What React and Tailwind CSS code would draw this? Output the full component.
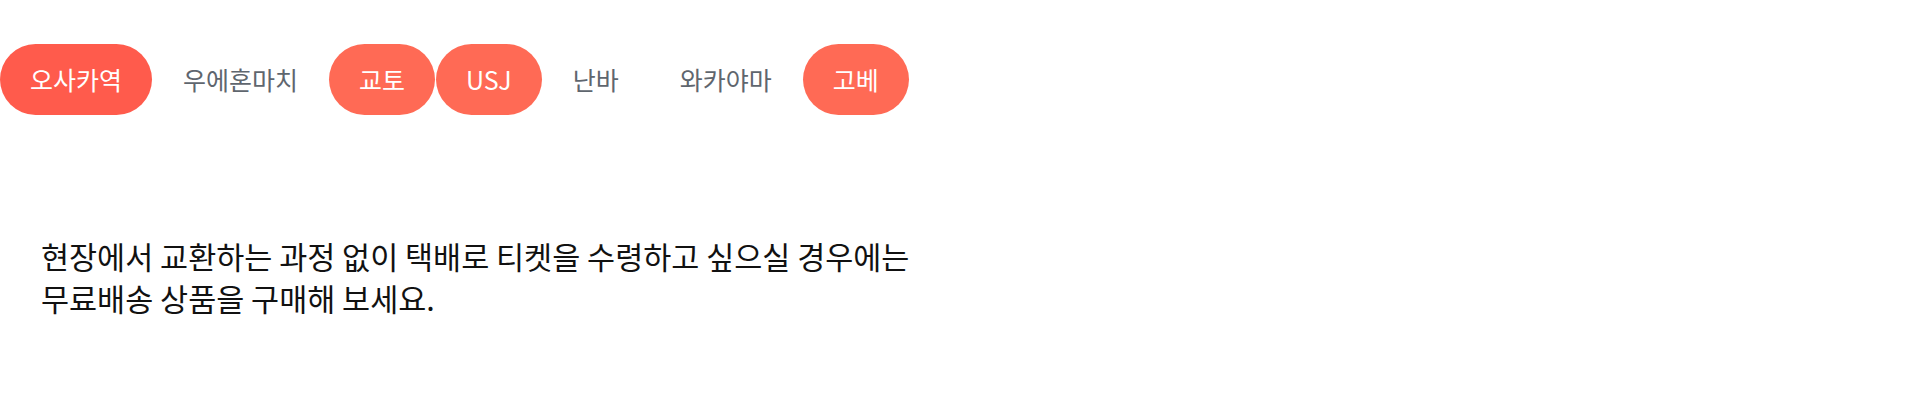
import React, { useState } from "react";

const areas = [
  { name: "오사카역", on: true, tone: "bg-[#ff5b4c]" },
  { name: "우에혼마치", on: false },
  { name: "교토", on: true, tone: "bg-[#ff6a55]" },
  { name: "USJ", on: true, tone: "bg-[#ff6a55]" },
  { name: "난바", on: false },
  { name: "와카야마", on: false },
  { name: "고베", on: true, tone: "bg-[#ff6a55]" },
];

const App = () => {
  const [list] = useState(areas);

  return (
    <div
      className="w-[1919px] h-[402px] bg-white"
      style={{ fontFamily: '"Noto Sans CJK KR", "Noto Sans", sans-serif' }}
    >
      {/* area tabs */}
      <div className="flex items-center gap-[1px] pt-[44px]">
        {list.map((a) => (
          <button
            key={a.name}
            className={
              a.on
                ? `h-[71px] px-[30px] rounded-full text-white text-[25px] ${a.tone}`
                : "h-[71px] px-[30px] rounded-full text-[#5f666e] text-[25px]"
            }
          >
            {a.name}
          </button>
        ))}
      </div>

      {/* notice */}
      <p className="mt-[120px] pl-[41px] text-[30.5px] leading-[42px] text-[#111111]">
        현장에서 교환하는 과정 없이 택배로 티켓을 수령하고 싶으실 경우에는
        <br />
        무료배송 상품을 구매해 보세요.
      </p>
    </div>
  );
};

export default App;
